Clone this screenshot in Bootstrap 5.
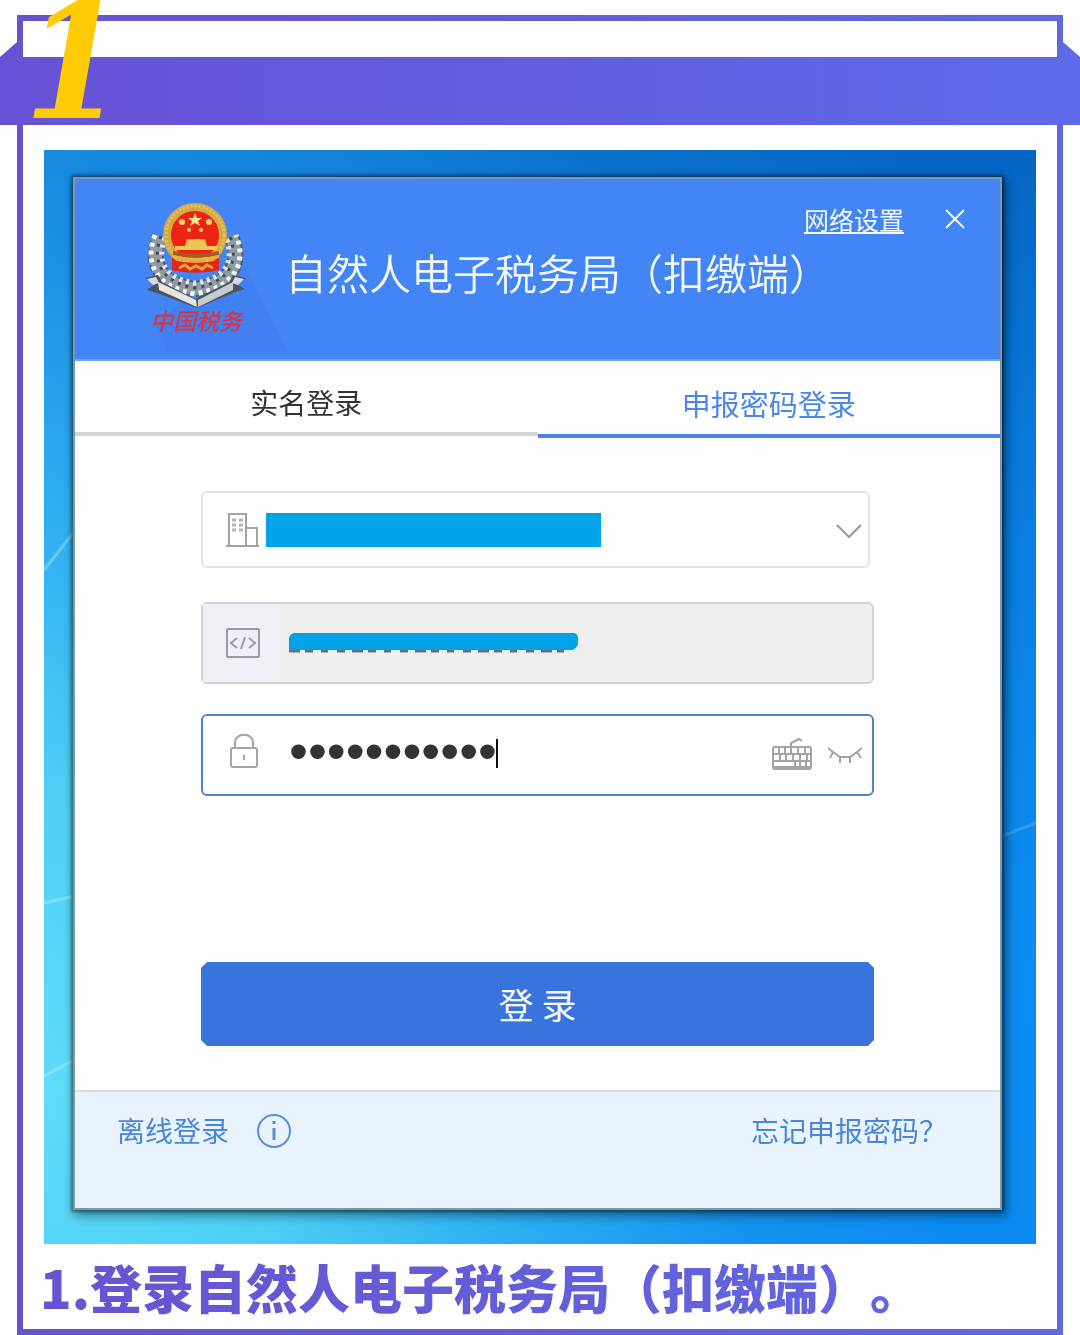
<!DOCTYPE html>
<html lang="zh-CN">
<head>
<meta charset="utf-8">
<meta name="viewport" content="width=device-width, initial-scale=1">
<title>自然人电子税务局（扣缴端）</title>
<link href="https://cdn.jsdelivr.net/npm/bootstrap@5.3.0/dist/css/bootstrap.min.css" rel="stylesheet">
<style>
  body { background: #fefefe; font-family: "Noto Sans CJK SC", sans-serif; text-spacing-trim: space-all; }
  .step-frame { margin: 15px 17px 0; border: 6px solid; border-image: linear-gradient(90deg, #6853cf, #6069e2) 1; padding: 36px 21px 0; }
  .ribbon { height: 68px; margin: 0 -44px 25px; background: linear-gradient(90deg, #6851d4, #5d6aea); }
  .ribbon::before, .ribbon::after { content: ""; position: absolute; top: -15px; width: 17px; height: 15px; }
  .ribbon::before { left: 0; background: #6851d4; clip-path: polygon(0 100%, 100% 0, 100% 100%); }
  .ribbon::after { right: 0; background: #5d6aea; clip-path: polygon(0 0, 100% 100%, 0 100%); }
  .step-no { position: absolute; left: 24px; bottom: 4px; font: italic bold 160px/118px "DejaVu Serif Condensed", "DejaVu Serif", serif; height: 118px; color: #ffcb05; z-index: 2; }
  .desktop { padding: 27px 34px 34px 29px; background: linear-gradient(#0d86e000 60%, #2cb5fb00 90%), radial-gradient(ellipse 100% 110% at 0 86%, #5fdcf8 0, #4dcff6 25%, #35b9f6cc 48%, #1e9ff566 72%, #1e9ff500 95%), linear-gradient(90deg, #1583d6, #1583d600 90%), linear-gradient(#0566c4, #0a7fe2 36%, #0c8df3 75%, #0b8bf2); }
  .streaks { position: absolute; inset: 0; width: 100%; height: 100%; }
  .login-win { border: 2px solid #7f98a6; background: #fefefe; box-shadow: 0 0 3px 2px #0006, 3px 4px 10px 2px #0006; }
  .win-head { height: 182px; background: #4385f5; border-bottom: 2px solid #6ba6f6; padding: 23px 34px 0 70px; color: #f2f8ff; }
  .win-title { font-size: 42px; line-height: 48px; font-weight: 350; margin-top: 46px; margin-left: -4px; white-space: nowrap; }
  .net-link { font-size: 25px; line-height: 38px; color: #f2f8ff; text-underline-offset: 2px; text-decoration-thickness: 2px; }
  .win-tools { position: absolute; right: 34px; top: 21px; gap: 40px; }
  .bare { border: 0; background: none; padding: 0; line-height: 0; }
  .tab-btn { height: 76px; border: 0; border-bottom: 4px solid #d2d4d6; background: none; font-size: 28px; color: #333; }
  .tab-idle { height: 75px; padding: 10px 0 0; }
  .tab-on { height: 77px; border-bottom-color: #4a85e4; color: #4a88e8; font-size: 29px; padding: 12px 0 0; }
  .win-body { padding: 53px 126px 44px; }
  .field { border: 2px solid #ccc; border-radius: 6px; height: 82px; }
  .field input, .field select { border: 0; outline: 0; background: transparent; appearance: none; height: 100%; width: 100%; }
  .f-company { height: 77px; border-color: #e4e4e4; margin: 0 4px 34px 0; padding-left: 23px; }
  .f-code { background: #efefef; border-color: #d0d2d2; margin-bottom: 30px; }
  .f-code .lead-ico { background: #eff0f6; width: 77px; height: 100%; padding-left: 22px; }
  .f-pass { border-color: #4d82cf; margin-bottom: 166px; padding: 0 10px 0 25px; }
  .f-pass input { font: 54px/60px "Liberation Sans", sans-serif; color: #333; padding: 0 0 8px; }
  .cover-a { position: absolute; left: 63px; top: 20px; width: 335px; height: 34px; background: #00a2e8; }
  .cover-b { position: absolute; left: 86px; top: 29px; width: 289px; height: 20px; }
  .chev { position: absolute; right: 6px; top: 29px; pointer-events: none; }
  .caret { position: absolute; left: 293px; top: 23px; width: 2px; height: 29px; background: #111; }
  .login-btn { height: 84px; border: 0; color: #f5f9ff; font-size: 35px; background: #3874dc; clip-path: polygon(6px 0, calc(100% - 6px) 0, 100% 6px, 100% calc(100% - 6px), calc(100% - 6px) 100%, 6px 100%, 0 calc(100% - 6px), 0 6px); }
  .win-foot { height: 118px; background: #e8f3fd; border-top: 2px solid #d3e0e8; padding: 17px 53px 0 42px; }
  .win-foot a { font-size: 28px; line-height: 42px; color: #4a86d8; text-decoration: none; }
  .caption-line { font-size: 52px; line-height: 85px; font-weight: 900; margin: 0 0 0 -4px; white-space: nowrap; background: linear-gradient(90deg, #6853cf, #6069e2); background-clip: text; -webkit-background-clip: text; color: transparent; }
</style>
<script src="https://cdn.jsdelivr.net/npm/bootstrap@5.3.0/dist/js/bootstrap.bundle.min.js"></script>
</head>
<body>
<main class="step-frame">
  <div class="ribbon position-relative"><span class="step-no">1</span></div>

  <section class="desktop position-relative">
    <svg class="streaks" viewBox="0 0 992 1094" preserveAspectRatio="none" aria-hidden="true">
      <g stroke="#c8f6ff" stroke-width="3" opacity=".35"><path d="M0 420 30 382M0 753 30 746M0 926 30 910"/><path d="M958 686 992 673" opacity=".5"/></g>
    </svg>
    <div class="login-win position-relative">
      <header class="win-head d-flex align-items-start position-relative">
        <svg width="144" height="152" viewBox="0 0 144 152" class="flex-shrink-0" role="img" aria-label="中国税务">
          <path d="M100 66 143 150H22L10 118Z" fill="#3a77e6" opacity=".3"/>
          <g fill="none">
            <path d="M15 34C4 60 14 82 50 87 88 82 97 60 86 34" stroke="#4f5b69" stroke-width="16" stroke-dasharray="5 2"/>
            <path d="M15 34C4 60 14 82 50 87 88 82 97 60 86 34" stroke="#909aa3" stroke-width="12"/>
            <path d="M10 33C-1 60 10 85 50 92 91 85 102 60 91 33" stroke="#f1f3f4" stroke-width="5" stroke-dasharray="4 4"/>
            <path d="M16 34C6 60 17 80 50 86 85 80 94 60 85 34" stroke="#3f4a57" stroke-width="3" stroke-dasharray="3 5"/>
            <path d="M20 36C11 60 21 77 50 81 80 77 90 60 81 36" stroke="#e4e8ea" stroke-width="5" stroke-dasharray="3 4"/>
          </g>
          <path d="M0 76 13 73 17 80 50 97 84 80 88 73 101 76 91 82 100 87 88 91 52 106 12 91 2 88 10 82Z" fill="#4a5562"/>
          <path d="M13 80 51 98 52 105 14 88Z" fill="#e9e6df"/>
          <path d="M88 80 53 98 53 105 88 88Z" fill="#c5cbce"/>
          <path d="M2 77 11 75 14 81 8 83ZM99 77 90 75 87 81 93 83Z" fill="#d6dadd"/>
          <path d="M27 50H74V68Q51 73 27 68Z" fill="#df2618"/>
          <circle cx="50" cy="33" r="28" fill="#ed2313" stroke="#d6aa42" stroke-width="8"/>
          <circle cx="50" cy="33" r="29" fill="none" stroke="#e8c258" stroke-width="3" stroke-dasharray="2 2"/>
          <path d="m50 11 2 5h5l-4 3 2 5-5-3-5 3 2-5-4-3h5Z" fill="#ffe58a"/>
          <g fill="#ffd969"><circle cx="37" cy="20" r="3"/><circle cx="64" cy="20" r="3"/><circle cx="44" cy="28" r="2"/><circle cx="56" cy="28" r="2"/></g>
          <path d="M42 37H60L62 44H72V48H30V44H40Z" fill="#efc554"/>
          <path d="M28 49Q51 55 74 49V53Q51 59 28 53Z" fill="#a8591d"/>
          <path d="M28 53Q51 59 74 53V56Q51 62 28 56Z" fill="#e8b23c"/>
          <path d="M27 58Q51 64 74 58V68Q51 73 27 68Z" fill="#df2618"/>
          <path d="M34 66 40 63 45 67 51 64 57 67 62 63 68 66" fill="none" stroke="#e6a338" stroke-width="3"/>
          <text x="5" y="128" font-size="23" font-weight="500" font-style="italic" fill="#d93444" font-family="Noto Sans CJK SC, sans-serif">中国税务</text>
        </svg>
        <h1 class="win-title mb-0">自然人电子税务局（扣缴端）</h1>
        <div class="win-tools d-flex align-items-center">
          <a href="#" class="net-link">网络设置</a>
          <button type="button" class="bare" aria-label="关闭"><svg width="22" height="22" viewBox="0 0 22 22" stroke="#f2f8ff" stroke-width="2"><path d="M2 2 20 20M20 2 2 20"/></svg></button>
        </div>
      </header>

      <nav class="d-flex align-items-start">
        <button type="button" class="tab-btn tab-idle w-50">实名登录</button>
        <button type="button" class="tab-btn tab-on w-50">申报密码登录</button>
      </nav>

      <form class="win-body">
        <div class="field f-company d-flex align-items-center position-relative">
          <svg width="34" height="36" viewBox="0 0 34 36" class="flex-shrink-0" fill="none" stroke="#a3a3a3" stroke-width="2"><path d="M0 34H33M3 34V2H20V34M20 16H31V34"/><path d="M6 8H10M13 8H17M6 13H10M13 13H17M6 18H10M13 18H17" stroke-width="3" stroke="#b5b5b5"/></svg>
          <select aria-label="企业名称"><option></option></select>
          <span class="cover-a"></span>
          <svg class="chev" width="26" height="18" viewBox="0 0 26 18" fill="none" stroke="#999" stroke-width="2"><path d="M1 3 13 15 25 3"/></svg>
        </div>

        <div class="field f-code d-flex align-items-center position-relative">
          <label for="code" class="lead-ico d-flex align-items-center flex-shrink-0" aria-label="税号">
            <svg width="36" height="32" viewBox="0 0 36 32" fill="none" stroke="#9b9ca3" stroke-width="2"><rect x="2" y="2" width="32" height="28" rx="1"/><path d="M12 11 6 16 12 21M24 11 30 16 24 21M20 10 16 22"/></svg>
          </label>
          <input id="code" type="text" readonly>
          <svg class="cover-b" viewBox="0 0 289 20" aria-hidden="true"><path d="M0 18H275" stroke="#66727a" stroke-width="3" stroke-dasharray="11 5 8 8 7 9 8 7"/><path d="M5 0H285Q289 1 289 5V11Q288 15 283 17H0V5Q1 1 5 0Z" fill="#00a2e8"/></svg>
        </div>

        <div class="field f-pass d-flex align-items-center position-relative">
          <label for="pwd" class="flex-shrink-0" aria-label="密码">
            <svg class="d-block mb-2" width="61" height="36" viewBox="0 0 61 36" fill="none" stroke="#a3a3a3" stroke-width="2"><rect x="3" y="15" width="26" height="19" rx="2"/><path d="M7 15V10C7-1 25-1 25 10V15M16 22V27"/></svg>
          </label>
          <input id="pwd" type="password" value="12345678901">
          <span class="caret"></span>
          <button type="button" class="bare me-3" aria-label="软键盘"><svg width="40" height="36" viewBox="0 0 40 36" fill="none" stroke="#a3a3a3" stroke-width="2"><rect x="1" y="10" width="38" height="22" rx="2"/><path d="M19 10V6L23 4 27 2 30 4"/><path d="M1 17H39M1 24H39M7 10V17M13 10V17M19 10V17M26 10V17M33 10V17M8 17V24M14 17V24M21 17V24M28 17V24M35 17V24M23 24V29M28 24V29M34 24V29M2 30H38"/></svg></button>
          <button type="button" class="bare" aria-label="显示密码"><svg width="34" height="18" viewBox="0 0 34 18" fill="none" stroke="#a3a3a3" stroke-width="2"><path d="M0 2 5 6 12 11H22L29 6 34 2M5 6 2 12M29 6 33 12M12 10V17M22 10V17"/></svg></button>
        </div>

        <button type="button" class="login-btn w-100">登 录</button>
      </form>

      <footer class="win-foot d-flex align-items-start">
        <a href="#">离线登录</a>
        <button type="button" class="bare mt-1 ms-4" aria-label="说明"><svg class="ms-1" width="34" height="36" viewBox="1 0 34 36" fill="none" stroke="#5590dc" stroke-width="2"><circle cx="18" cy="18" r="16"/><path d="M18 15V27M18 8V11" stroke-width="3"/></svg></button>
        <a href="#" class="ms-auto">忘记申报密码？</a>
      </footer>
    </div>
  </section>

  <p class="caption-line">1.登录自然人电子税务局（扣缴端）。</p>
</main>
</body>
</html>
